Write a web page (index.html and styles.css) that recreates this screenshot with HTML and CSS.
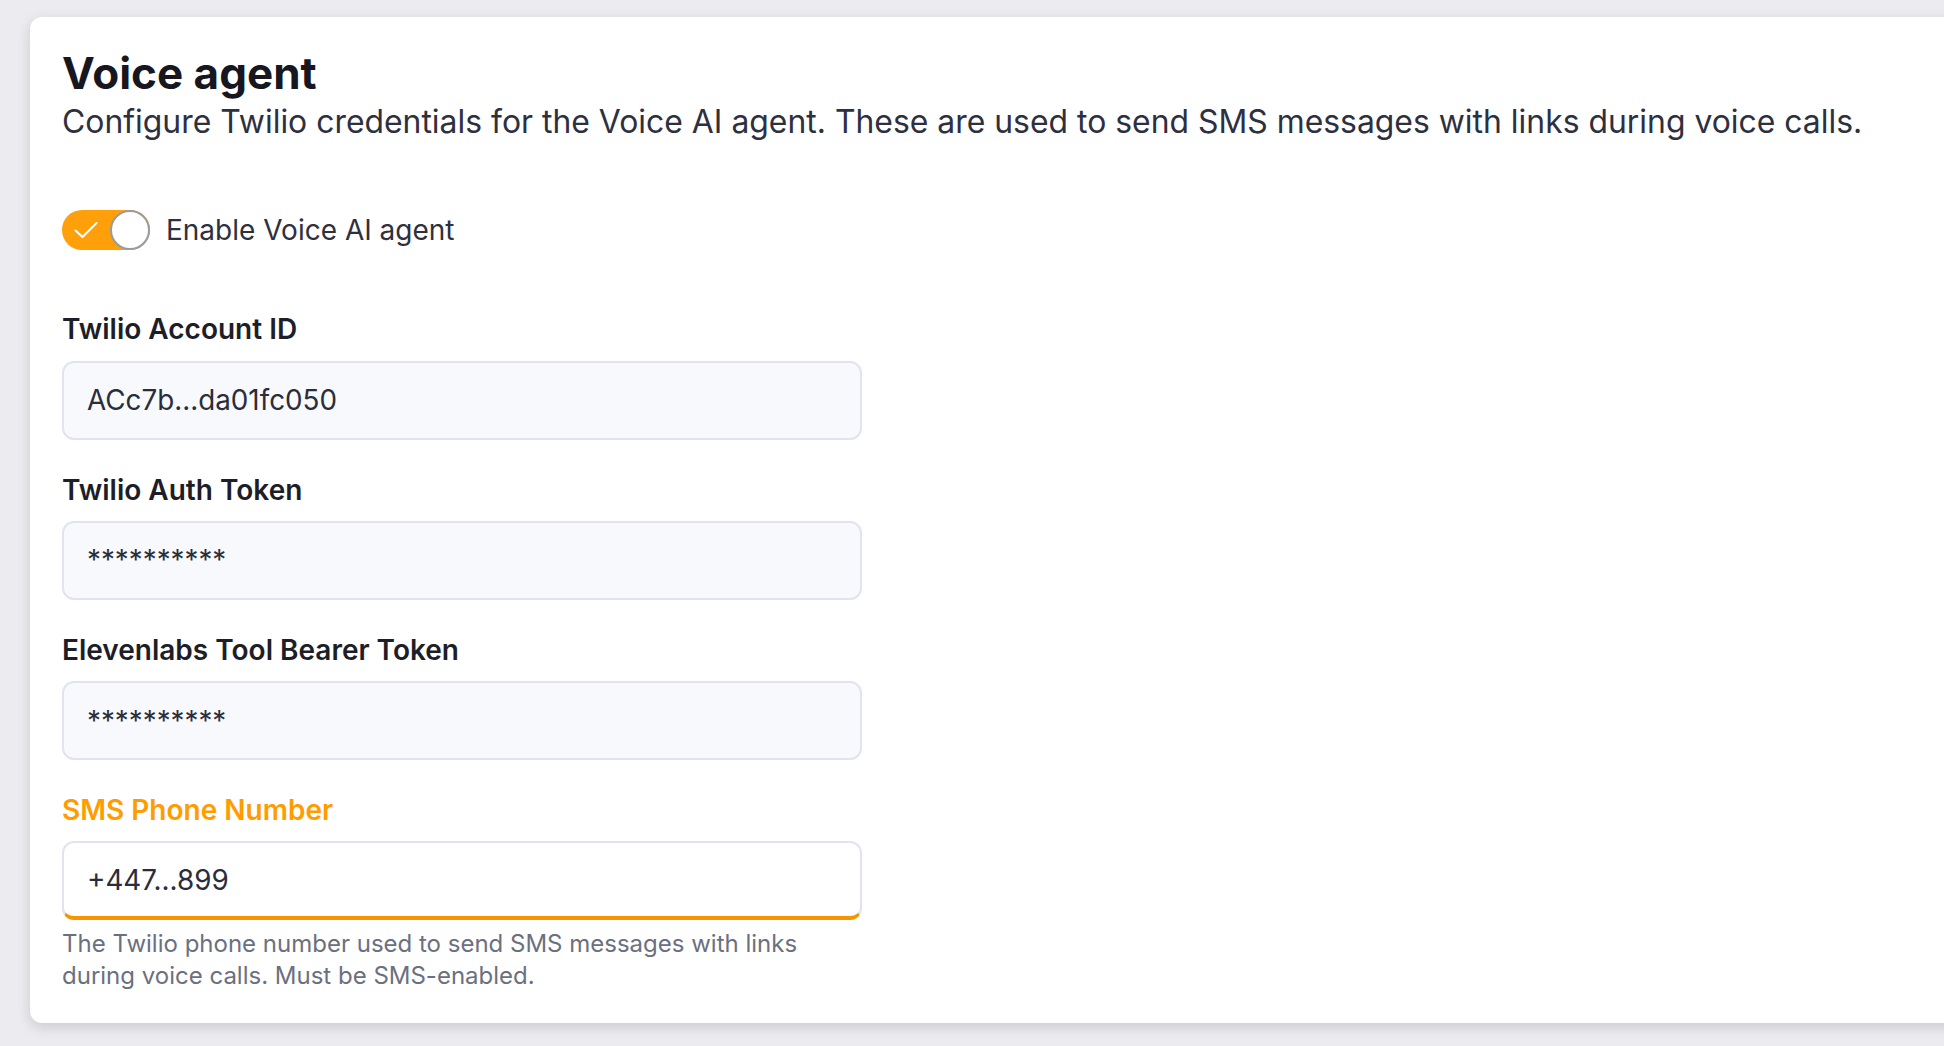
FILE: index.html
```html
<!DOCTYPE html>
<html lang="en">
<head>
  <meta charset="UTF-8" />
  <meta name="viewport" content="width=device-width, initial-scale=1.0"/>
  <title>Voice agent</title>
  <link rel="stylesheet" href="styles.css">
</head>
<body>
  <div class="page">
    <div class="card">
      <h1>Voice agent</h1>
      <p class="intro">Configure Twilio credentials for the Voice AI agent. These are used to send SMS messages with links during voice calls.</p>

      <label class="switch-row">
        <span class="switch">
          <svg class="check" viewBox="0 0 24 24" width="28" height="28">
            <path d="M3 12.5 L9 18 L21 6" fill="none" stroke="#fff" stroke-width="1.8" stroke-linecap="round" stroke-linejoin="round"/>
          </svg>
          <span class="knob"></span>
        </span>
        <span class="switch-text">Enable Voice AI agent</span>
      </label>

      <div class="field">
        <label for="account-id">Twilio Account ID</label>
        <input type="text" id="account-id" value="ACc7b...da01fc050" />
      </div>

      <div class="field">
        <label for="auth-token">Twilio Auth Token</label>
        <input type="text" id="auth-token" value="**********" />
      </div>

      <div class="field">
        <label for="bearer-token">Elevenlabs Tool Bearer Token</label>
        <input type="text" id="bearer-token" value="**********" />
      </div>

      <div class="field active">
        <label for="sms-number">SMS Phone Number</label>
        <input type="text" id="sms-number" value="+447...899" />
        <p class="hint">The Twilio phone number used to send SMS messages with links<br>during voice calls. Must be SMS-enabled.</p>
      </div>
    </div>
  </div>
</body>
</html>
```

FILE: styles.css
```css
html, body {
  margin: 0;
  height: 100%;
}

body {
  font-family: Inter, "Noto Sans", sans-serif;
  background: #ebebf0;
  color: #2b2d3a;
  overflow: hidden;
}

.page {
  padding: 17px 0 0 30px;
}

.card {
  background: #fff;
  margin-right: -40px;
  padding: 30px 32px 31px;
  border-radius: 12px;
  box-shadow: 0 4px 14px rgba(0,0,0,0.14);
}

h1 {
  margin: 0;
  font-size: 44px;
  line-height: 1.2;
  font-weight: 700;
  color: #16171f;
}

.intro {
  margin: 0;
  font-size: 31.9px;
  line-height: 1.4;
  color: #2e3040;
}

.switch-row {
  display: flex;
  align-items: center;
  gap: 16px;
  margin-top: 66px;
  font-size: 28px;
  color: #2e3040;
}

.switch {
  position: relative;
  width: 88px;
  height: 40px;
  border-radius: 20px;
  background: #ff9f0a;
  flex-shrink: 0;
}

.check {
  position: absolute;
  left: 10px;
  top: 6px;
}

.knob {
  position: absolute;
  right: 0;
  top: 0;
  width: 36px;
  height: 36px;
  border-radius: 50%;
  background: #fff;
  border: 2px solid #9b9b9b;
}

.field {
  display: flex;
  flex-direction: column;
  width: 800px;
  margin-top: 31px;
}

.switch-row + .field {
  margin-top: 60px;
}

.field label {
  font-size: 28px;
  line-height: 1.4;
  font-weight: 600;
  color: #1d1e27;
  margin-bottom: 11px;
}

.field input {
  box-sizing: border-box;
  height: 79px;
  padding: 0 23px;
  font-family: inherit;
  font-size: 27.8px;
  color: #2b2d3a;
  background: #f8f9fc;
  border: 2px solid #e2e3f0;
  border-radius: 12px;
  outline: none;
}

.field.active label {
  color: #ff9c00;
}

.field.active input {
  background: #fff;
  border-bottom: 4px solid #f59600;
}

.hint {
  margin: 8px 0 0;
  font-size: 24px;
  line-height: 32px;
  color: #6b7080;
}
```
